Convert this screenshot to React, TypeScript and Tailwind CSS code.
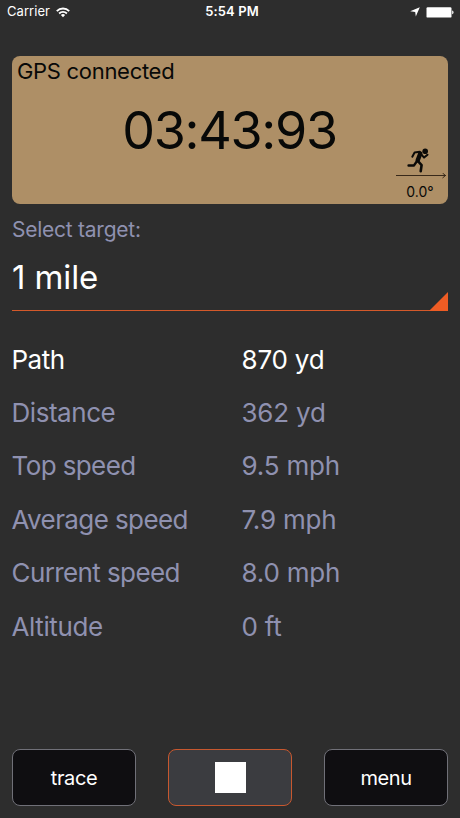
import type { ReactNode } from "react";

const stats = [
  { label: "Path", value: "870 yd", labelSpacing: "tracking-[-0.5px]", active: true },
  { label: "Distance", value: "362 yd", labelSpacing: "tracking-[-0.45px]" },
  { label: "Top speed", value: "9.5 mph", labelSpacing: "tracking-[-0.6px]" },
  { label: "Average speed", value: "7.9 mph", labelSpacing: "tracking-[-0.6px]" },
  { label: "Current speed", value: "8.0 mph", labelSpacing: "tracking-[-0.6px]" },
  { label: "Altitude", value: "0 ft", labelSpacing: "tracking-[-0.4px]" },
];

function StatusBar() {
  return (
    <header className="grid h-6 grid-cols-3 items-center pl-[7px] pr-[6px] text-[13px] text-white">
      <div className="flex items-center gap-[6px]">
        <span className="tracking-[0.05px]">Carrier</span>
        <svg width="14" height="11" viewBox="0 0 14 11" fill="none" stroke="white">
          <path d="M.8 4.1a8.8 8.8 0 0 1 12.4 0" strokeWidth="1.9" />
          <path d="M3.1 6.5a5.5 5.5 0 0 1 7.8 0" strokeWidth="1.8" />
          <path d="M7 10.3 4.9 8.1a3 3 0 0 1 4.2 0Z" fill="white" stroke="none" />
        </svg>
      </div>
      <div className="pl-[3px] text-center font-semibold tracking-[0.1px]">5:54 PM</div>
      <div className="flex items-center justify-end gap-[6px]">
        <svg width="10" height="10" viewBox="0 0 10 10" fill="white">
          <path d="M9.8.2 5.8 9.6 5.2 4.9.2 4.3Z" />
        </svg>
        <svg width="28" height="11" viewBox="0 0 28 11" fill="white">
          <rect x="0.5" y="0.2" width="25" height="10.4" rx="1.2" />
          <path d="M26.2 3.6c1.8.3 1.8 3.4 0 3.7Z" />
        </svg>
      </div>
    </header>
  );
}

function Runner() {
  return (
    <svg
      className="mr-[4px]"
      width="24"
      height="26"
      viewBox="0 0 24 26"
      fill="none"
      stroke="#0b0a08"
      strokeLinecap="round"
      strokeLinejoin="round"
    >
      <circle cx="18.2" cy="4.2" r="2.8" fill="#0b0a08" stroke="none" />
      <path d="m13.3 6.6-2.6 6.6" strokeWidth="4.4" />
      <path d="M12.8 4.8 7.6 5.6 5.3 9.7" strokeWidth="2" />
      <path d="m14.5 7.6 2.6 3 3.4-2.9" strokeWidth="2" />
      <path d="m11.2 14.4 3.4 3.7-.9 6.2" strokeWidth="2.6" />
      <path d="M9.8 14.4 7 18.4H1.6" strokeWidth="2.5" />
    </svg>
  );
}

function GpsCard() {
  return (
    <section className="flex h-[148px] flex-col rounded-[8px] bg-[#ae8f66] text-[#080908]">
      <div className="flex h-[31px] items-center pl-[5px] text-[22px] tracking-[-0.3px]">GPS connected</div>
      <div className="flex h-[87px] items-center justify-center pr-[1px] text-[52px] tracking-[-1.3px]">
        03:43:93
      </div>
      <div className="-mt-[27px] mr-[1px] flex w-[52px] flex-col items-center self-end">
        <Runner />
        <svg width="52" height="7" viewBox="0 0 52 7" fill="none" stroke="#38291a">
          <path d="M1 2.5h50" />
          <path d="m47.5 0 3 2.5-3 2.5" />
        </svg>
        <span className="mt-[2px] pr-[2px] text-[14px] leading-[20px]">0.0°</span>
      </div>
    </section>
  );
}

function TargetSelect() {
  return (
    <section>
      <div className="flex h-[51px] items-center text-[21px] tracking-[-0.25px] text-[#8f91b0]">Select target:</div>
      <div className="flex h-[56px] items-end justify-between border-b border-[#d4592a]">
        <span className="pb-[13px] text-[33px] leading-[40px] tracking-[-0.1px] text-white">1 mile</span>
        <svg className="-mb-px" width="19" height="19" viewBox="0 0 19 19" fill="#ee5c24">
          <path d="M19 0v19H0Z" />
        </svg>
      </div>
    </section>
  );
}

function BottomButton({ children, active }: { children: ReactNode; active?: boolean }) {
  const colors = active ? "border-[#c7582f] bg-[#3b3c40]" : "border-[#707078] bg-[#0f0e11]";
  return (
    <button
      className={`flex h-[57px] items-center justify-center rounded-[8px] border text-[20px] tracking-[-0.4px] text-white ${colors}`}
    >
      {children}
    </button>
  );
}

export default function App() {
  return (
    <main className="flex h-[818px] w-[460px] flex-col bg-[#2d2d2d] font-['Inter',sans-serif]">
      <StatusBar />

      <div className="flex flex-1 flex-col px-[12px] pt-[32px] pb-[12px]">
        <GpsCard />
        <TargetSelect />

        <div className="mt-[21.5px] text-[26px]">
          {stats.map((stat) => (
            <div
              key={stat.label}
              className={`-ml-[0.5px] grid h-[53.4px] grid-cols-[230px_1fr] items-center ${
                stat.active ? "text-white" : "text-[#8f91b0]"
              }`}
            >
              <span className={stat.labelSpacing}>{stat.label}</span>
              <span className="tracking-[-0.2px]">{stat.value}</span>
            </div>
          ))}
        </div>

        <div className="mt-auto grid grid-cols-3 gap-[32px]">
          <BottomButton>trace</BottomButton>
          <BottomButton active>
            <span className="h-[31px] w-[31px] bg-white" />
          </BottomButton>
          <BottomButton>menu</BottomButton>
        </div>
      </div>
    </main>
  );
}
